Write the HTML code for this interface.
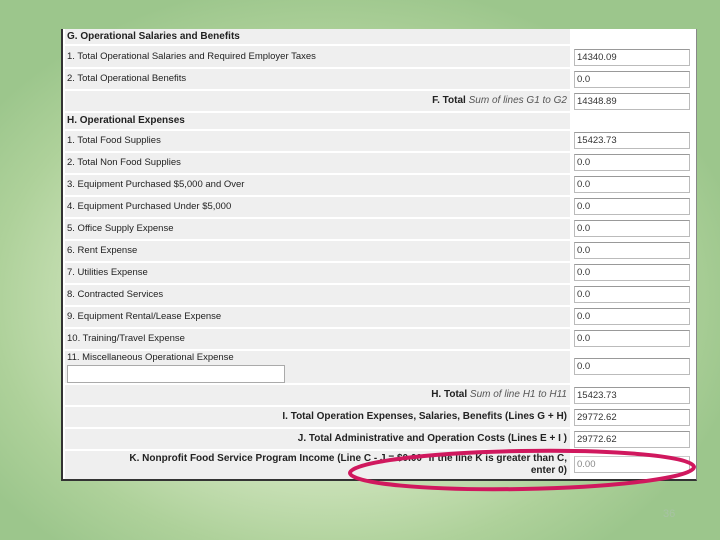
<!DOCTYPE html>
<html><head><meta charset="utf-8"><style>
body{margin:0;width:720px;height:540px;overflow:hidden;position:relative;font-family:"Liberation Sans",sans-serif;
background:radial-gradient(ellipse 420px 320px at 330px 300px,#eef5e2 0%,#d6e8c4 45%,#aed19a 80%,#9cc68c 100%);}
.panel{position:absolute;left:61px;top:29px;width:633px;height:450px;background:#fff;border-left:2px solid #333;border-bottom:2px solid #333;border-right:1px solid #888;}
.r{position:absolute;left:2px;width:505px;background:#efefef;font-size:9.5px;color:#222;box-sizing:border-box;padding-left:2px;white-space:nowrap;}
.h{font-weight:bold;font-size:10px;}
.t{text-align:right;padding-right:3px;font-weight:bold;font-size:10px}
.t i{font-weight:normal;color:#555}
.in{position:absolute;left:511px;width:116px;height:17px;border:1px solid #bbb;border-top-color:#999;background:#fff;font-size:9.5px;color:#333;box-sizing:border-box;padding:2px 2px;}
</style></head><body>
<div class="panel">
<div class="r h" style="top:0;height:15px;line-height:15px">G. Operational Salaries and Benefits</div>
<div class="r" style="top:17px;height:21px;line-height:21px">1. Total Operational Salaries and Required Employer Taxes</div><div class="in" style="top:20px">14340.09</div>
<div class="r" style="top:40px;height:20px;line-height:20px">2. Total Operational Benefits</div><div class="in" style="top:42px">0.0</div>
<div class="r t" style="top:62px;height:20px;line-height:20px">F. Total <i>Sum of lines G1 to G2</i></div><div class="in" style="top:64px">14348.89</div>
<div class="r h" style="top:84px;height:16px;line-height:16px">H. Operational Expenses</div>
<div class="r" style="top:102px;height:20px;line-height:20px">1. Total Food Supplies</div><div class="in" style="top:103px">15423.73</div>
<div class="r" style="top:124px;height:20px;line-height:20px">2. Total Non Food Supplies</div><div class="in" style="top:125px">0.0</div>
<div class="r" style="top:146px;height:20px;line-height:20px">3. Equipment Purchased $5,000 and Over</div><div class="in" style="top:147px">0.0</div>
<div class="r" style="top:168px;height:20px;line-height:20px">4. Equipment Purchased Under $5,000</div><div class="in" style="top:169px">0.0</div>
<div class="r" style="top:190px;height:20px;line-height:20px">5. Office Supply Expense</div><div class="in" style="top:191px">0.0</div>
<div class="r" style="top:212px;height:20px;line-height:20px">6. Rent Expense</div><div class="in" style="top:213px">0.0</div>
<div class="r" style="top:234px;height:20px;line-height:20px">7. Utilities Expense</div><div class="in" style="top:235px">0.0</div>
<div class="r" style="top:256px;height:20px;line-height:20px">8. Contracted Services</div><div class="in" style="top:257px">0.0</div>
<div class="r" style="top:278px;height:20px;line-height:20px">9. Equipment Rental/Lease Expense</div><div class="in" style="top:279px">0.0</div>
<div class="r" style="top:300px;height:20px;line-height:20px">10. Training/Travel Expense</div><div class="in" style="top:301px">0.0</div>
<div class="r" style="top:322px;height:32px;line-height:14px">11. Miscellaneous Operational Expense<div style="width:216px;height:16px;background:#fff;border:1px solid #aaa;margin-top:0"></div></div><div class="in" style="top:329px">0.0</div>
<div class="r t" style="top:356px;height:20px;line-height:20px">H. Total <i>Sum of line H1 to H11</i></div><div class="in" style="top:358px">15423.73</div>
<div class="r t" style="top:378px;height:20px;line-height:20px">I. Total Operation Expenses, Salaries, Benefits (Lines G + H)</div><div class="in" style="top:380px">29772.62</div>
<div class="r t" style="top:400px;height:20px;line-height:20px">J. Total Administrative and Operation Costs (Lines E + I )</div><div class="in" style="top:402px">29772.62</div>
<div class="r t" style="top:422px;height:28px;line-height:12px;padding-top:2px">K. Nonprofit Food Service Program Income (Line C - J = $0.00* if the line K is greater than C,<br>enter 0)</div><div class="in" style="top:427px;border-top-color:#ccc;color:#888">0.00</div>
</div>
<svg style="position:absolute;left:0;top:0" width="720" height="540"><ellipse cx="522" cy="470" rx="172" ry="19" fill="none" stroke="#d0185e" stroke-width="4" transform="rotate(-1 522 470)"/></svg>
<div style="position:absolute;left:663px;top:508px;font-size:11px;color:#a8c3a4;font-family:'Liberation Sans',sans-serif">36</div>
</body></html>
